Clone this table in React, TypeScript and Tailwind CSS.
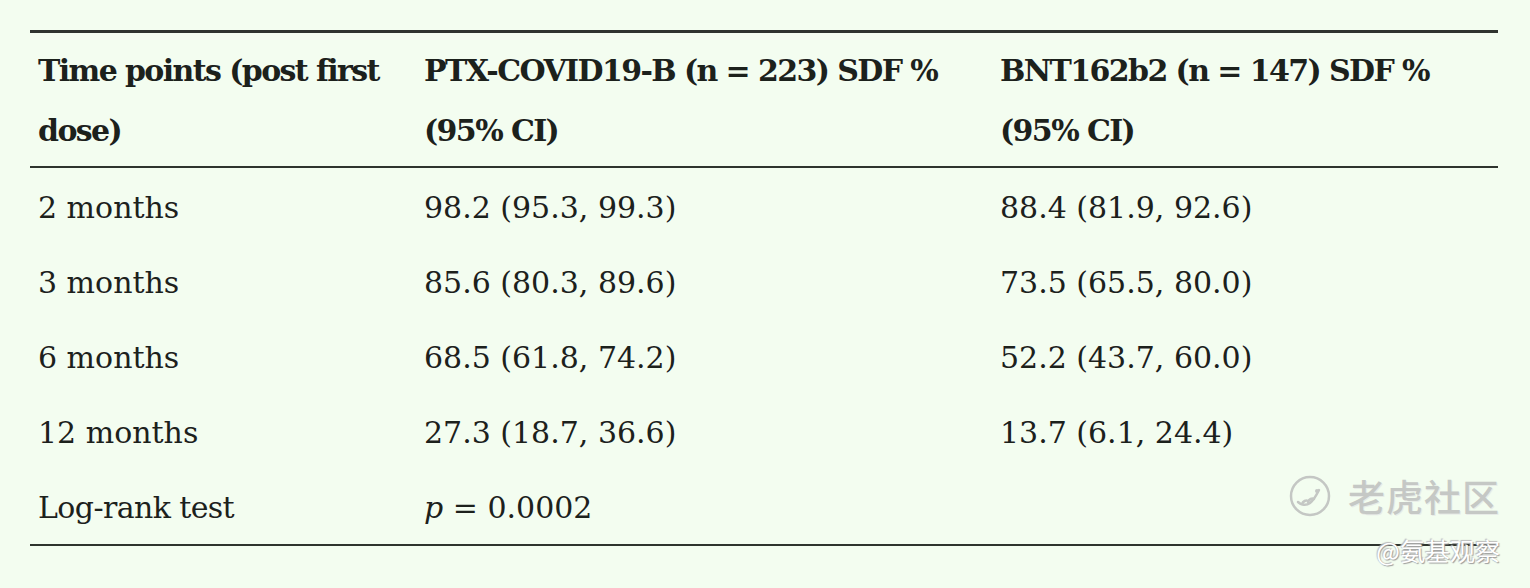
const rows = [
  ['2 months', '98.2 (95.3, 99.3)', '88.4 (81.9, 92.6)'],
  ['3 months', '85.6 (80.3, 89.6)', '73.5 (65.5, 80.0)'],
  ['6 months', '68.5 (61.8, 74.2)', '52.2 (43.7, 60.0)'],
  ['12 months', '27.3 (18.7, 36.6)', '13.7 (6.1, 24.4)'],
];

function Watermark() {
  return (
    <div className="absolute right-[30px] top-[474px] flex flex-col items-end gap-[20px] pointer-events-none">
      <div className="flex items-center gap-[16px]">
        <svg width="44" height="44" viewBox="0 0 44 44" fill="none" stroke="#c4c7c4" strokeWidth="2.5">
          <circle cx="22" cy="22" r="19" />
          <path d="M10 28c3 3 8 4 12 1s7-9 9-13" strokeLinecap="round" />
          <path d="M14 30c1-3 4-4 6-3M20 28c1-3 4-4 6-3" strokeLinecap="round" />
          <circle cx="29" cy="17" r="2" fill="#c4c7c4" stroke="none" />
        </svg>
        <span className="text-[37px] leading-none tracking-[1px] text-[#c5c8c5] font-['Noto_Sans_CJK_SC',sans-serif] font-medium [text-shadow:1px_1px_0_#e8ece8]">
          老虎社区
        </span>
      </div>
      <span className="text-[25px] leading-none text-white font-['Noto_Sans_CJK_SC',sans-serif] [text-shadow:1px_1px_1px_#9a9a9a,-1px_-1px_1px_#bbbbbb]">
        @氨基观察
      </span>
    </div>
  );
}

export default function App() {
  return (
    <div className="relative w-[1530px] h-[588px] bg-[#f3fdf0] pt-[30px] px-[30px] text-[#1c211c] font-['DejaVu_Serif',serif] overflow-hidden">
      <table className="w-[1468px] border-collapse table-fixed text-[30px] leading-[59px]">
        <colgroup>
          <col className="w-[386px]" />
          <col className="w-[576px]" />
          <col className="w-[506px]" />
        </colgroup>
        <thead>
          <tr className="border-t-[3px] border-b-[2px] border-[#2e342e] leading-[60px]">
            <th className="text-left align-top font-bold px-2 pt-2 pb-[5px] tracking-[-1.6px]">
              Time points (post first<br />dose)
            </th>
            <th className="text-left align-top font-bold px-2 pt-2 pb-[5px] tracking-[-1.6px]">
              PTX-COVID19-B (n = 223) SDF %<br />(95% CI)
            </th>
            <th className="text-left align-top font-bold px-2 pt-2 pb-[5px] tracking-[-1.6px]">
              BNT162b2 (n = 147) SDF %<br />(95% CI)
            </th>
          </tr>
        </thead>
        <tbody>
          {rows.map((r) => (
            <tr key={r[0]}>
              <td className="px-2 pt-[10px] pb-[6px]">{r[0]}</td>
              <td className="px-2 pt-[10px] pb-[6px]">{r[1]}</td>
              <td className="px-2 pt-[10px] pb-[6px]">{r[2]}</td>
            </tr>
          ))}
          <tr className="border-b-[2px] border-[#2e342e]">
            <td className="px-2 pt-[10px] pb-[7px] tracking-[-0.6px]">Log-rank test</td>
            <td className="px-2 pt-[10px] pb-[7px]">
              <i>p</i> = 0.0002
            </td>
            <td className="px-2 pt-[10px] pb-[7px]"></td>
          </tr>
        </tbody>
      </table>
      <Watermark />
    </div>
  );
}
